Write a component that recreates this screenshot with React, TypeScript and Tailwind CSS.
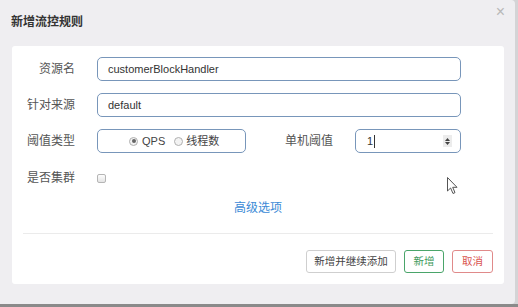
import React from "react";

const font = { fontFamily: '"Liberation Sans", "Noto Sans CJK SC", sans-serif' };

// 流控规则弹窗
export default function App() {
  return (
    <div
      className="relative w-[518px] h-[307px] bg-[#d4d4d6] flex flex-col overflow-hidden"
      style={font}
    >
      <div className="w-[515px] h-[304px] bg-[#efeef1] rounded-r-[4px] flex flex-col">
        {/* header */}
        <div className="h-[46px] flex items-start justify-between pl-[11px] pr-[10px]">
          <div className="mt-[13px] text-[12px] font-bold text-[#333] leading-[18px]">
            新增流控规则
          </div>
          <div className="mt-[3px] text-[16px] text-[#b8b8b8] leading-[18px]">×</div>
        </div>

        {/* body card */}
        <div className="ml-[12px] w-[492px] h-[238px] bg-white rounded-[3px] flex flex-col pt-[11px]">
          <Row label="资源名">
            <TextBox value="customerBlockHandler" />
          </Row>
          <div className="h-[12px]" />
          <Row label="针对来源">
            <TextBox value="default" />
          </Row>
          <div className="h-[12px]" />
          <Row label="阈值类型">
            <div className="w-[149px] h-[24px] border border-[#7896ba] rounded-[5px] flex items-center pl-[31px] text-[11px] text-[#444]">
              <Radio checked />
              <span className="ml-[4px]">QPS</span>
              <span className="ml-[9px]">
                <Radio />
              </span>
              <span className="ml-[3px]">线程数</span>
            </div>
            <div className="w-[87px] text-right text-[12px] text-[#555]">单机阈值</div>
            <div className="ml-[22px] w-[106px] h-[24px] border border-[#7896ba] rounded-[5px] flex items-center pl-[11px] pr-[8px] text-[11px] text-[#333]">
              <span>1</span>
              <span className="ml-[1px] w-px h-[13px] bg-[#333]" />
              <span className="flex-1" />
              <Spinner />
            </div>
          </Row>
          <div className="h-[16px] flex" />
          <div className="flex items-center h-[18px]">
            <div className="w-[63px] text-right text-[12px] text-[#555]">是否集群</div>
            <div className="ml-[22px] w-[9px] h-[9px] border border-[#b5b5b5] rounded-[2px] bg-gradient-to-b from-[#fdfdfd] to-[#e4e4e4]" />
          </div>
          <div className="mt-[13px] text-center text-[12px] text-[#3c8ad6] leading-[16px]">
            高级选项
          </div>
          <div className="mt-[17px] mx-[11px] h-px bg-[#ebebeb]" />
          <div className="mt-[16px] flex justify-end gap-[8px] pr-[11px]">
            <button className="h-[23px] w-[90px] border border-[#cfcfcf] rounded-[3px] text-[10.5px] text-[#444] bg-white">
              新增并继续添加
            </button>
            <button className="h-[23px] w-[40px] border border-[#4aa56a] rounded-[3px] text-[10.5px] text-[#3f9a5c] bg-white">
              新增
            </button>
            <button className="h-[23px] w-[41px] border border-[#e08a8a] rounded-[3px] text-[10.5px] text-[#d9534f] bg-white">
              取消
            </button>
          </div>
        </div>
      </div>
      <div className="h-[3px] w-full bg-[#8a8a8a]" />

      {/* mouse pointer */}
      <svg
        className="absolute left-[447px] top-[177px]"
        width="12"
        height="18"
        viewBox="0 0 12 18"
      >
        <path
          d="M0.5 0.5 L0.5 14 L3.6 11 L6 16.5 L8 15.6 L5.7 10.3 L10 10.3 Z"
          fill="#fff"
          stroke="#555"
          strokeWidth="1"
          strokeLinejoin="round"
        />
      </svg>
    </div>
  );
}

function Row({ label, children }: { label: string; children: React.ReactNode }) {
  return (
    <div className="flex items-center h-[24px]">
      <div className="w-[63px] text-right text-[12px] text-[#555]">{label}</div>
      <div className="ml-[22px] flex items-center">{children}</div>
    </div>
  );
}

function TextBox({ value }: { value: string }) {
  return (
    <div className="w-[364px] h-[24px] border border-[#7896ba] rounded-[5px] flex items-center pl-[10px] text-[11px] text-[#333]">
      {value}
    </div>
  );
}

function Radio({ checked = false }: { checked?: boolean }) {
  return (
    <span className="w-[9px] h-[9px] rounded-full border border-[#b0b0b0] bg-[#f3f3f3] flex items-center justify-center">
      {checked && <span className="w-[4px] h-[4px] rounded-full bg-[#666]" />}
    </span>
  );
}

function Spinner() {
  return (
    <span className="w-[9px] h-[12px] bg-[#ececec] flex flex-col items-center justify-center gap-[1px]">
      <svg width="5" height="3" viewBox="0 0 5 3">
        <path d="M0 3 L2.5 0 L5 3 Z" fill="#444" />
      </svg>
      <svg width="5" height="3" viewBox="0 0 5 3">
        <path d="M0 0 L2.5 3 L5 0 Z" fill="#444" />
      </svg>
    </span>
  );
}
